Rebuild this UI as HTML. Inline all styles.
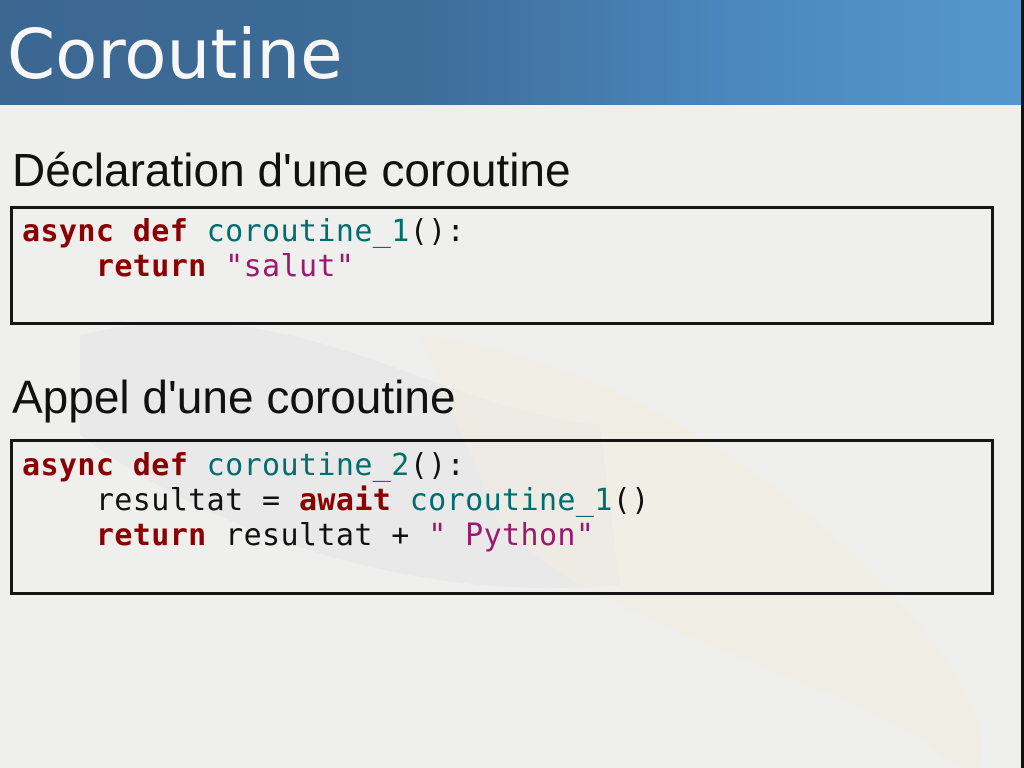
<!DOCTYPE html>
<html><head><meta charset="utf-8"><style>
html,body{margin:0;padding:0}
body{width:1024px;height:768px;position:relative;overflow:hidden;background:#efefed;font-family:"Liberation Sans",sans-serif}
.hdr{position:absolute;left:0;top:0;width:1021px;height:105px;background:linear-gradient(90deg,#3b6791 0%,#3d6c98 40%,#4a86bb 70%,#5597cc 100%)}
.edge{position:absolute;right:0;top:0;width:3px;height:768px;background:#111}
.title{position:absolute;left:7px;top:10px;font-family:"DejaVu Sans",sans-serif;font-size:69px;color:#f7f7f7;line-height:90px}
.h2{position:absolute;left:12px;font-size:46px;color:#111;line-height:50px}
.box{position:absolute;left:10px;width:978px;border:3px solid #151515;box-sizing:content-box}
pre{margin:0;position:absolute;left:22px;font-family:"DejaVu Sans Mono",monospace;font-size:30px;line-height:35px;color:#111;letter-spacing:0.4px}
.k{color:#8b0000;font-weight:bold}.f{color:#006e6e}.s{color:#9a1a70}
</style></head><body>
<svg style="position:absolute;left:0;top:105px" width="1024" height="663">
<path d="M80 230 C 300 180 420 300 600 320 L 620 480 C 400 500 200 420 80 330 Z" fill="#e3e4e6" opacity="0.5"/>
<path d="M420 230 C 650 260 850 420 950 560 C 1000 640 990 700 930 640 C 800 560 600 520 500 420 Z" fill="#f0ece0" opacity="0.6"/>
</svg>
<div class="hdr"></div>
<div class="title">Coroutine</div>
<div class="edge"></div>
<div class="h2" style="top:145px">Déclaration d'une coroutine</div>
<div class="box" style="top:206px;height:113px"></div>
<pre style="top:214px"><span class="k">async def</span> <span class="f">coroutine_1</span>():
    <span class="k">return</span> <span class="s">"salut"</span></pre>
<div class="h2" style="top:372px">Appel d'une coroutine</div>
<div class="box" style="top:439px;height:150px"></div>
<pre style="top:448px"><span class="k">async def</span> <span class="f">coroutine_2</span>():
    resultat = <span class="k">await</span> <span class="f">coroutine_1</span>()
    <span class="k">return</span> resultat + <span class="s">" Python"</span></pre>
</body></html>
